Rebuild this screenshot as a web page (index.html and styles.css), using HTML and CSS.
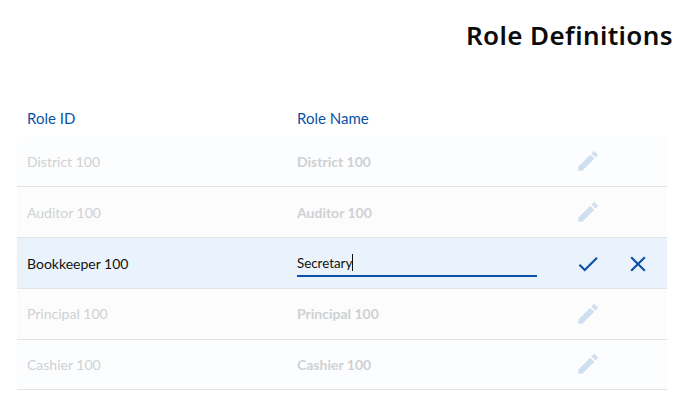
FILE: index.html
```html
<!DOCTYPE html>
<html lang="en">
<head>
<meta charset="utf-8">
<title>Role Definitions</title>
<link rel="stylesheet" href="styles.css">
</head>
<body>
<h1 class="title">Role Definitions</h1>
<div class="table">
  <div class="row head"><div class="c1">Role ID</div><div class="c2">Role Name</div></div>
  <div class="row dim tint"><div class="c1">District 100</div><div class="c2 strong">District 100</div>
    <div class="act"><svg class="icon pencil" viewBox="0 0 24 24"><path d="M3 17.25V21h3.75L17.81 9.94l-3.75-3.75L3 17.25zM20.71 7.04c.39-.39.39-1.02 0-1.41l-2.34-2.34c-.39-.39-1.02-.39-1.41 0l-1.83 1.83 3.75 3.75 1.83-1.83z"/></svg></div></div>
  <div class="row dim"><div class="c1">Auditor 100</div><div class="c2 strong">Auditor 100</div>
    <div class="act"><svg class="icon pencil" viewBox="0 0 24 24"><path d="M3 17.25V21h3.75L17.81 9.94l-3.75-3.75L3 17.25zM20.71 7.04c.39-.39.39-1.02 0-1.41l-2.34-2.34c-.39-.39-1.02-.39-1.41 0l-1.83 1.83 3.75 3.75 1.83-1.83z"/></svg></div></div>
  <div class="row editing"><div class="c1">Bookkeeper 100</div>
    <div class="c2"><div class="field"><span>Secretary</span><i class="caret"></i></div></div>
    <div class="act"><svg class="icon" viewBox="0 0 24 24"><path d="M9 16.17L4.83 12l-1.42 1.41L9 19 21 7l-1.41-1.41z"/></svg></div>
    <div class="act"><svg class="icon" viewBox="0 0 24 24"><path d="M19 6.41L17.59 5 12 10.59 6.41 5 5 6.41 10.59 12 5 17.59 6.41 19 12 13.41 17.59 19 19 17.59 13.41 12z"/></svg></div></div>
  <div class="row dim"><div class="c1">Principal 100</div><div class="c2 strong">Principal 100</div>
    <div class="act"><svg class="icon pencil" viewBox="0 0 24 24"><path d="M3 17.25V21h3.75L17.81 9.94l-3.75-3.75L3 17.25zM20.71 7.04c.39-.39.39-1.02 0-1.41l-2.34-2.34c-.39-.39-1.02-.39-1.41 0l-1.83 1.83 3.75 3.75 1.83-1.83z"/></svg></div></div>
  <div class="row dim tint"><div class="c1">Cashier 100</div><div class="c2 strong">Cashier 100</div>
    <div class="act"><svg class="icon pencil" viewBox="0 0 24 24"><path d="M3 17.25V21h3.75L17.81 9.94l-3.75-3.75L3 17.25zM20.71 7.04c.39-.39.39-1.02 0-1.41l-2.34-2.34c-.39-.39-1.02-.39-1.41 0l-1.83 1.83 3.75 3.75 1.83-1.83z"/></svg></div></div>
</div>
</body>
</html>
```
FILE: styles.css
```css
html, body { margin: 0; padding: 0; background: #fff; }
body { width: 684px; height: 417px; overflow: hidden; font-family: Lato, sans-serif; font-size: 14px; color: #111; }
.title { margin: 0; padding: 18px 11px 0 0; height: 34px; line-height: 34px; text-align: right; font-family: "Noto Sans", sans-serif; font-size: 26px; font-weight: 600; letter-spacing: 0.4px; color: #0b0b0b; }
.table { margin: 47px 17px 0; width: 650px; }
.row { display: grid; grid-template-columns: 280px 266px 50px 50px; height: 50.75px; box-sizing: border-box; align-items: center; border-bottom: 1px solid #e2e4e6; background: #fcfcfc; }
.row.head { height: 37.55px; border-bottom: 0; background: none; color: #0a52a8; font-size: 15px; }
.c1 { padding-left: 10px; }
.dim { color: #cfd1d3; }
.tint { background: #fcfdfe; }
.strong { font-weight: 700; }
.editing { background: #eaf3fb; padding-top: 1.2px; }
.field { width: 240px; height: 26px; box-sizing: border-box; border-bottom: 2px solid #0a52a8; display: flex; align-items: center; font-size: 13.33px; }
.caret { width: 1px; height: 17px; background: #111; }
.act { display: flex; justify-content: center; }
.icon { width: 26px; height: 26px; fill: #0a52a8; display: block; }
.pencil { fill: #cfdff0; }
```
